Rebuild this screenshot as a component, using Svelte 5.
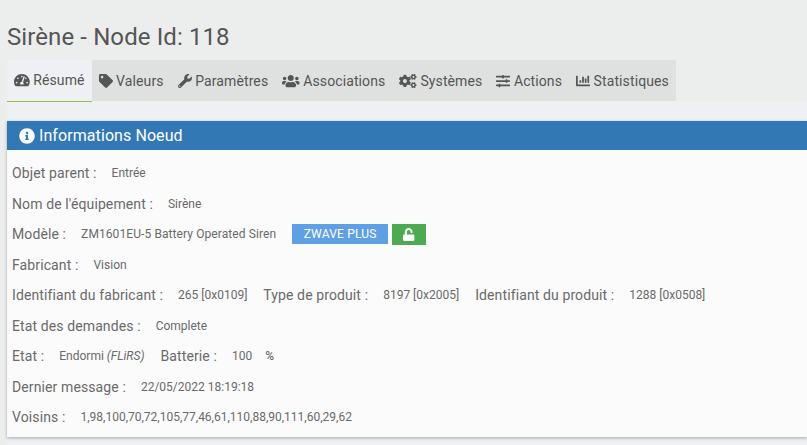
<script>
  const icons = {
    dashboard: [576, 'M288 32C128.94 32 0 160.94 0 320c0 52.8 14.25 102.26 39.06 144.8 5.61 9.62 16.3 15.2 27.44 15.2h443c11.14 0 21.83-5.58 27.44-15.2C561.75 422.26 576 372.8 576 320c0-159.06-128.94-288-288-288zm0 64c14.71 0 26.58 10.13 30.32 23.65-1.11 2.26-2.64 4.23-3.45 6.67l-9.22 27.67c-5.13 3.49-10.97 6.01-17.64 6.01-17.67 0-32-14.33-32-32S270.33 96 288 96zM96 384c-17.67 0-32-14.33-32-32s14.33-32 32-32 32 14.33 32 32-14.33 32-32 32zm48-160c-17.67 0-32-14.33-32-32s14.33-32 32-32 32 14.33 32 32-14.33 32-32 32zm246.77-72.41l-61.33 184C343.13 347.33 352 364.54 352 384c0 11.72-3.38 22.55-8.88 32H232.88c-5.5-9.45-8.88-20.28-8.88-32 0-33.94 26.5-61.43 59.9-63.59l61.34-184.01c4.17-12.56 17.73-19.45 30.36-15.17 12.57 4.19 19.35 17.79 15.17 30.36zm14.66 57.2l15.52-46.55c3.47-1.29 7.13-2.23 11.05-2.23 17.67 0 32 14.33 32 32s-14.33 32-32 32c-11.38-.01-20.89-6.28-26.57-15.22zM480 384c-17.67 0-32-14.33-32-32s14.33-32 32-32 32 14.33 32 32-14.33 32-32 32z'],
    tag: [512, 'M0 252.118V48C0 21.49 21.49 0 48 0h204.118a48 48 0 0 1 33.941 14.059l211.882 211.882c18.745 18.745 18.745 49.137 0 67.882L293.823 497.941c-18.745 18.745-49.137 18.745-67.882 0L14.059 286.059A48 48 0 0 1 0 252.118zM112 64c-26.51 0-48 21.49-48 48s21.49 48 48 48 48-21.49 48-48-21.49-48-48-48z'],
    wrench: [512, 'M507.73 109.1c-2.24-9.03-13.54-12.09-20.12-5.51l-74.36 74.36-67.88-11.31-11.31-67.88 74.36-74.36c6.62-6.62 3.43-17.9-5.66-20.16-47.38-11.74-99.55.91-136.58 37.93-39.64 39.64-50.55 97.1-34.05 147.2L18.74 402.76c-24.99 24.99-24.99 65.51 0 90.5 24.99 24.99 65.51 24.99 90.5 0l213.21-213.21c50.12 16.71 107.47 5.68 147.37-34.22 37.07-37.07 49.7-89.32 37.91-136.73zM64 472c-13.25 0-24-10.75-24-24 0-13.26 10.75-24 24-24s24 10.74 24 24c0 13.25-10.75 24-24 24z'],
    users: [640, 'M96 224c35.3 0 64-28.7 64-64s-28.7-64-64-64-64 28.7-64 64 28.7 64 64 64zm448 0c35.3 0 64-28.7 64-64s-28.7-64-64-64-64 28.7-64 64 28.7 64 64 64zm32 32h-64c-17.6 0-33.5 7.1-45.1 18.6 40.3 22.1 68.9 62 75.1 109.4h66c17.7 0 32-14.3 32-32v-32c0-35.3-28.7-64-64-64zm-256 0c61.9 0 112-50.1 112-112S381.9 32 320 32 208 82.1 208 144s50.1 112 112 112zm76.8 32h-8.3c-20.8 10-43.9 16-68.5 16s-47.6-6-68.5-16h-8.3C179.6 288 128 339.6 128 403.2V432c0 26.5 21.5 48 48 48h288c26.5 0 48-21.5 48-48v-28.8c0-63.6-51.6-115.2-115.2-115.2zm-223.7-13.4C161.5 263.1 145.6 256 128 256H64c-35.3 0-64 28.7-64 64v32c0 17.7 14.3 32 32 32h65.9c6.3-47.4 34.9-87.3 75.2-109.4z'],
    cogs: [640, 'M512.1 191l-8.2 14.3c-3 5.3-9.4 7.5-15.1 5.4-11.8-4.4-22.6-10.7-32.1-18.6-4.6-3.8-5.8-10.5-2.8-15.7l8.2-14.3c-6.9-8-12.3-17.3-15.9-27.4h-16.5c-6 0-11.2-4.3-12.2-10.3-2-12-2.1-24.6 0-37.1 1-6 6.2-10.4 12.2-10.4h16.5c3.6-10.1 9-19.4 15.9-27.4l-8.2-14.3c-3-5.2-1.9-11.9 2.8-15.7 9.5-7.9 20.4-14.2 32.1-18.6 5.7-2.1 12.1.1 15.1 5.4l8.2 14.3c10.5-1.9 21.2-1.9 31.7 0L552 6.3c3-5.3 9.4-7.5 15.1-5.4 11.8 4.4 22.6 10.7 32.1 18.6 4.6 3.8 5.8 10.5 2.8 15.7l-8.2 14.3c6.9 8 12.3 17.3 15.9 27.4h16.5c6 0 11.2 4.3 12.2 10.3 2 12 2.1 24.6 0 37.1-1 6-6.2 10.4-12.2 10.4h-16.5c-3.6 10.1-9 19.4-15.9 27.4l8.2 14.3c3 5.2 1.9 11.9-2.8 15.7-9.5 7.9-20.4 14.2-32.1 18.6-5.7 2.1-12.1-.1-15.1-5.4l-8.2-14.3c-10.4 1.9-21.2 1.9-31.7 0zm-10.5-58.8c38.5 29.6 82.4-14.3 52.8-52.8-38.5-29.7-82.4 14.3-52.8 52.8zM386.3 286.1l33.7 16.8c10.1 5.8 14.5 18.1 10.5 29.1-8.9 24.2-26.4 46.4-42.6 65.8-7.4 8.9-20.2 11.1-30.3 5.3l-29.1-16.8c-16 13.7-34.6 24.6-54.9 31.7v33.6c0 11.6-8.3 21.6-19.7 23.6-24.6 4.2-50.4 4.4-75.9 0-11.5-2-20-11.9-20-23.6V418c-20.3-7.2-38.9-18-54.9-31.7L74 403c-10 5.8-22.9 3.6-30.3-5.3-16.2-19.4-33.3-41.6-42.2-65.7-4-10.9.4-23.2 10.5-29.1l33.3-16.8c-3.9-20.9-3.9-42.4 0-63.4L12 205.8c-10.1-5.8-14.6-18.1-10.5-29 8.9-24.2 26-46.4 42.2-65.8 7.4-8.9 20.2-11.1 30.3-5.3l29.1 16.8c16-13.7 34.6-24.6 54.9-31.7V57.1c0-11.5 8.2-21.5 19.6-23.5 24.6-4.2 50.5-4.4 76-.1 11.5 2 20 11.9 20 23.6v33.6c20.3 7.2 38.9 18 54.9 31.7l29.1-16.8c10-5.8 22.9-3.6 30.3 5.3 16.2 19.4 33.2 41.6 42.1 65.8 4 10.9.1 23.2-10 29.1l-33.7 16.8c3.9 21 3.9 42.5 0 63.5zm-117.6 21.1c59.2-77-28.7-164.9-105.7-105.7-59.2 77 28.7 164.9 105.7 105.7zm243.4 182.7l-8.2 14.3c-3 5.3-9.4 7.5-15.1 5.4-11.8-4.4-22.6-10.7-32.1-18.6-4.6-3.8-5.8-10.5-2.8-15.7l8.2-14.3c-6.9-8-12.3-17.3-15.9-27.4h-16.5c-6 0-11.2-4.3-12.2-10.3-2-12-2.1-24.6 0-37.1 1-6 6.2-10.4 12.2-10.4h16.5c3.6-10.1 9-19.4 15.9-27.4l-8.2-14.3c-3-5.2-1.9-11.9 2.8-15.7 9.5-7.9 20.4-14.2 32.1-18.6 5.7-2.1 12.1.1 15.1 5.4l8.2 14.3c10.5-1.9 21.2-1.9 31.7 0l8.2-14.3c3-5.3 9.4-7.5 15.1-5.4 11.8 4.4 22.6 10.7 32.1 18.6 4.6 3.8 5.8 10.5 2.8 15.7l-8.2 14.3c6.9 8 12.3 17.3 15.9 27.4h16.5c6 0 11.2 4.3 12.2 10.3 2 12 2.1 24.6 0 37.1-1 6-6.2 10.4-12.2 10.4h-16.5c-3.6 10.1-9 19.4-15.9 27.4l8.2 14.3c3 5.2 1.9 11.9-2.8 15.7-9.5 7.9-20.4 14.2-32.1 18.6-5.7 2.1-12.1-.1-15.1-5.4l-8.2-14.3c-10.4 1.9-21.2 1.9-31.7 0zM501.6 431c38.5 29.6 82.4-14.3 52.8-52.8-38.5-29.6-82.4 14.3-52.8 52.8z'],
    sliders: [512, 'M496 384H160v-16c0-8.8-7.2-16-16-16h-32c-8.8 0-16 7.2-16 16v16H16c-8.8 0-16 7.2-16 16v32c0 8.8 7.2 16 16 16h80v16c0 8.8 7.2 16 16 16h32c8.8 0 16-7.2 16-16v-16h336c8.8 0 16-7.2 16-16v-32c0-8.8-7.2-16-16-16zm0-160h-80v-16c0-8.8-7.2-16-16-16h-32c-8.8 0-16 7.2-16 16v16H16c-8.8 0-16 7.2-16 16v32c0 8.8 7.2 16 16 16h336v16c0 8.8 7.2 16 16 16h32c8.8 0 16-7.2 16-16v-16h80c8.8 0 16-7.2 16-16v-32c0-8.8-7.2-16-16-16zm0-160H288V48c0-8.8-7.2-16-16-16h-32c-8.8 0-16 7.2-16 16v16H16C7.2 64 0 71.2 0 80v32c0 8.8 7.2 16 16 16h208v16c0 8.8 7.2 16 16 16h32c8.8 0 16-7.2 16-16v-16h208c8.8 0 16-7.2 16-16V80c0-8.8-7.2-16-16-16z'],
    chart: [512, 'M332.8 320h38.4c6.4 0 12.8-6.4 12.8-12.8V172.8c0-6.4-6.4-12.8-12.8-12.8h-38.4c-6.4 0-12.8 6.4-12.8 12.8v134.4c0 6.4 6.4 12.8 12.8 12.8zm96 0h38.4c6.4 0 12.8-6.4 12.8-12.8V76.8c0-6.4-6.4-12.8-12.8-12.8h-38.4c-6.4 0-12.8 6.4-12.8 12.8v230.4c0 6.4 6.4 12.8 12.8 12.8zm-288 0h38.4c6.4 0 12.8-6.4 12.8-12.8v-70.4c0-6.4-6.4-12.8-12.8-12.8h-38.4c-6.4 0-12.8 6.4-12.8 12.8v70.4c0 6.4 6.4 12.8 12.8 12.8zm96 0h38.4c6.4 0 12.8-6.4 12.8-12.8V108.8c0-6.4-6.4-12.8-12.8-12.8h-38.4c-6.4 0-12.8 6.4-12.8 12.8v198.4c0 6.4 6.4 12.8 12.8 12.8zM496 384H64V80c0-8.84-7.16-16-16-16H16C7.16 64 0 71.16 0 80v336c0 17.67 14.33 32 32 32h464c8.84 0 16-7.16 16-16v-32c0-8.84-7.16-16-16-16z'],
    info: [512, 'M256 8C119.043 8 8 119.083 8 256c0 136.997 111.043 248 248 248s248-111.003 248-248C504 119.083 392.957 8 256 8zm0 110c23.196 0 42 18.804 42 42s-18.804 42-42 42-42-18.804-42-42 18.804-42 42-42zm56 254c0 6.627-5.373 12-12 12h-88c-6.627 0-12-5.373-12-12v-24c0-6.627 5.373-12 12-12h12v-64h-12c-6.627 0-12-5.373-12-12v-24c0-6.627 5.373-12 12-12h64c6.627 0 12 5.373 12 12v100h12c6.627 0 12 5.373 12 12v24z'],
    unlock: [448, 'M400 256H152V152.9c0-39.6 31.7-72.5 71.3-72.9 40-.4 72.7 32.1 72.7 72v16c0 13.3 10.7 24 24 24h32c13.3 0 24-10.7 24-24v-16C376 68 307.5-.3 223.5 0 139.5.3 72 69.5 72 153.5V256H48c-26.5 0-48 21.5-48 48v160c0 26.5 21.5 48 48 48h352c26.5 0 48-21.5 48-48V304c0-26.5-21.5-48-48-48z']
  };

  const tabs = [
    { label: 'Résumé', icon: 'dashboard', active: true },
    { label: 'Valeurs', icon: 'tag' },
    { label: 'Paramètres', icon: 'wrench' },
    { label: 'Associations', icon: 'users' },
    { label: 'Systèmes', icon: 'cogs' },
    { label: 'Actions', icon: 'sliders' },
    { label: 'Statistiques', icon: 'chart' }
  ];
</script>

{#snippet icon(name, size)}
  <svg class="icon" width={size * icons[name][0] / 512} height={size} viewBox="0 0 {icons[name][0]} 512">
    <path d={icons[name][1]} fill="currentColor" />
  </svg>
{/snippet}

<div class="page">
  <h1>Sirène - Node Id: 118</h1>

  <ul class="tabs">
    {#each tabs as tab}
      <li class:active={tab.active}>
        {@render icon(tab.icon, 14)}
        <span>{tab.label}</span>
      </li>
    {/each}
  </ul>

  <div class="content">
    <div class="panel">
      <div class="panel-head">
        {@render icon('info', 16)}
        <span>Informations Noeud</span>
      </div>
      <div class="panel-body">
        <div class="row"><b>Objet parent :</b><em>Entrée</em></div>
        <div class="row"><b>Nom de l'équipement :</b><em>Sirène</em></div>
        <div class="row">
          <b>Modèle :</b><em class="model">ZM1601EU-5 Battery Operated Siren</em>
          <span class="badge">ZWAVE PLUS</span>
          <span class="lock">{@render icon('unlock', 13)}</span>
        </div>
        <div class="row"><b>Fabricant :</b><em>Vision</em></div>
        <div class="row">
          <b>Identifiant du fabricant :</b><em>265 [0x0109]</em>
          <b class="next">Type de produit :</b><em>8197 [0x2005]</em>
          <b class="next">Identifiant du produit :</b><em>1288 [0x0508]</em>
        </div>
        <div class="row"><b>Etat des demandes :</b><em>Complete</em></div>
        <div class="row">
          <b>Etat :</b><em>Endormi <i>(FLiRS)</i></em>
          <b class="next">Batterie :</b><em>100</em><em class="unit">%</em>
        </div>
        <div class="row"><b>Dernier message :</b><em>22/05/2022 18:19:18</em></div>
        <div class="row"><b>Voisins :</b><em>1,98,100,70,72,105,77,46,61,110,88,90,111,60,29,62</em></div>
      </div>
    </div>
  </div>
</div>

<style>
  :global(body) {
    margin: 0;
    background: #eceeee;
    font-family: Roboto, sans-serif;
    overflow: hidden;
  }

  .page {
    height: 445px;
    padding-left: 7px;
    overflow: hidden;
  }

  h1 {
    margin: 0;
    padding-top: 22px;
    height: 38px;
    font-size: 24px;
    line-height: 30px;
    font-weight: 400;
    letter-spacing: 0.1px;
    color: #555;
    white-space: nowrap;
  }

  .tabs {
    display: flex;
    width: fit-content;
    height: 41px;
    margin: 0;
    padding: 0;
    list-style: none;
    background: #dfe1e0;
  }

  .tabs li {
    display: flex;
    align-items: center;
    gap: 3.5px;
    height: 41px;
    padding: 0 7px;
    font-size: 14px;
    letter-spacing: 0.11px;
    color: #555;
    white-space: nowrap;
  }

  .tabs li.active {
    position: relative;
    height: 42px;
    padding-bottom: 1px;
    box-sizing: border-box;
    background: #eff0f4;
    border-bottom: 1px solid #8fc144;
  }

  .icon {
    flex: none;
    display: block;
  }

  .content {
    height: 344px;
    padding-top: 20px;
    background: #eff0f4;
    box-sizing: border-box;
  }

  .panel {
    width: 800px;
    background: #fbfbfb;
    box-shadow: 0 1px 3px rgba(0, 0, 0, 0.3);
  }

  .panel-head {
    display: flex;
    align-items: center;
    gap: 4px;
    height: 29px;
    padding-left: 12px;
    background: #3278b5;
    color: #fff;
    font-size: 16px;
    letter-spacing: 0.08px;
  }

  .panel-body {
    display: flex;
    flex-direction: column;
    height: 287px;
    padding: 8px 0 0 5px;
    box-sizing: border-box;
  }

  .row {
    display: flex;
    align-items: center;
    height: 30.47px;
    flex: none;
    white-space: nowrap;
    color: #6a6a6a;
  }

  .row b {
    font-weight: 400;
    font-size: 14px;
    letter-spacing: 0.11px;
  }

  .row em {
    font-style: normal;
    font-size: 12px;
    margin-left: 15px;
  }

  .row em i {
    font-style: italic;
  }

  .row em.model {
    letter-spacing: 0.09px;
  }

  .row .next {
    margin-left: 16px;
  }

  .row .unit {
    margin-left: 13px;
    font-weight: 500;
  }

  .badge {
    width: 96px;
    height: 20px;
    margin-left: 16px;
    line-height: 20px;
    text-align: center;
    font-size: 12px;
    letter-spacing: 0.2px;
    color: #fff;
    background: #5f9fe3;
  }

  .lock {
    display: flex;
    align-items: center;
    justify-content: center;
    width: 34px;
    height: 21px;
    margin-left: 4px;
    color: #fff;
    background: #4cab50;
  }
</style>
